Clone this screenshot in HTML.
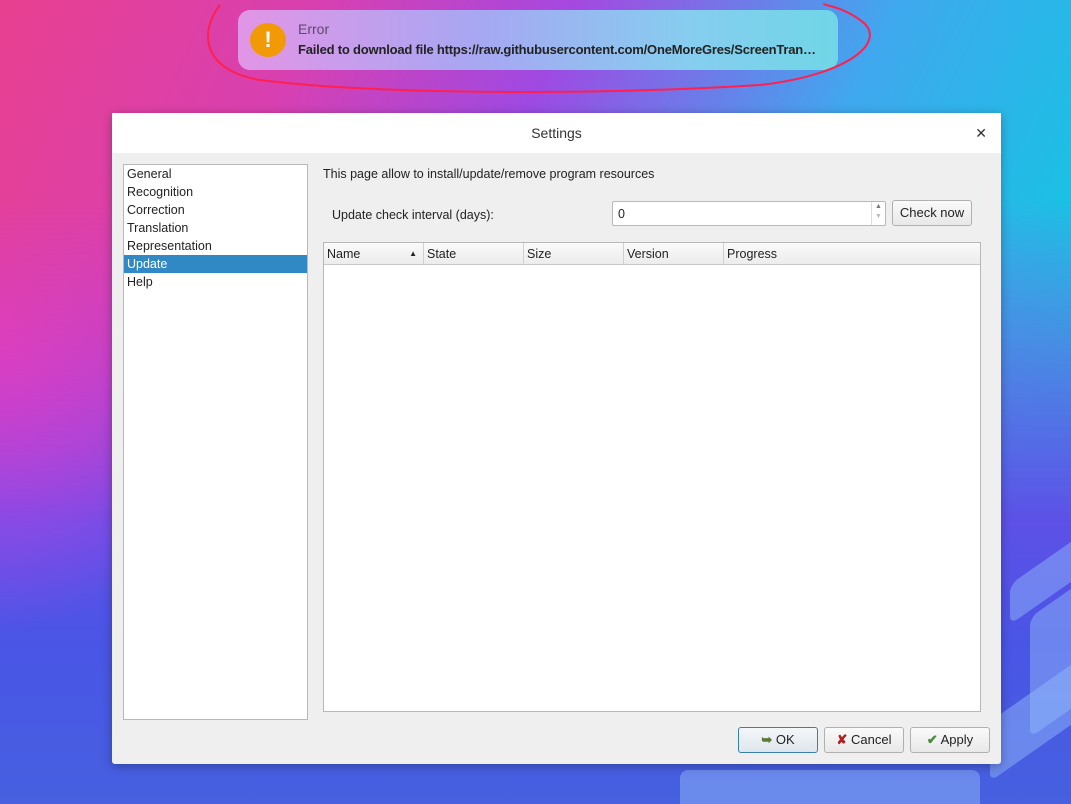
<!DOCTYPE html>
<html style="width:1071px;height:804px;overflow:hidden;background:#4a55e6"><head><meta charset="utf-8"><style>
*{box-sizing:border-box}
body{margin:0;width:1071px;height:804px;overflow:hidden;position:relative;font-family:"Liberation Sans",sans-serif;font-size:12.5px;color:#222;
background:linear-gradient(180deg,#c83fd8 0%,#a044e4 30%,#6a4ee8 55%,#4a55e6 80%,#4660e0 100%);}
.bg0{position:absolute;inset:0;background:radial-gradient(ellipse 260px 300px at 0px 330px,rgba(225,60,225,.9),rgba(225,60,225,0))}
.bg2{position:absolute;inset:0;background:linear-gradient(115deg,#e84090 0%,#d840b0 22%,rgba(140,80,230,.6) 40%,#40a8ee 62%,#12c6e2 85%,#10c8e0 100%);-webkit-mask-image:linear-gradient(180deg,#000 0%,#000 25%,transparent 65%);mask-image:linear-gradient(180deg,#000 0%,#000 25%,transparent 65%)}
.shape{position:absolute;background:rgba(150,190,250,.45);border-radius:8px}
.toast{position:absolute;left:238px;top:10px;width:600px;height:60px;border-radius:12px;background:linear-gradient(90deg,#e295e6,#a7a7f2 40%,#86cdef 75%,#70d6e6);}
.ico{position:absolute;left:12px;top:13px;width:36px;height:34px;border-radius:50%;background:#f29a06;color:#fff;font-weight:bold;font-size:22px;text-align:center;line-height:34px}
.dlg{position:absolute;left:112px;top:113px;width:889px;height:651px;background:#efefef;border-radius:3px;box-shadow:0 2px 10px rgba(0,0,0,.3)}
.title{height:40px;background:#fff;text-align:center;line-height:40px;font-size:14px;color:#333;position:relative}
.list{position:absolute;left:11px;top:51px;width:185px;height:556px;background:#fff;border:1px solid #b8b8b8}
.list div{height:18px;line-height:19px;padding-left:3px}
.sel{background:#3089c5;color:#fff}
.btn{position:absolute;height:26px;border:1px solid #b0b0b0;border-radius:3px;background:linear-gradient(#fafafa,#e8e8e8);text-align:center;line-height:24px;font-size:13px}
.table{position:absolute;left:211px;top:129px;width:658px;height:470px;background:#fff;border:1px solid #b8b8b8}
.th{height:22px;background:linear-gradient(#fafafa,#ececec);border-bottom:1px solid #c8c8c8;position:relative}
.th span{position:absolute;top:0;height:21px;line-height:22px;padding-left:3px;border-right:1px solid #d0d0d0}
</style></head><body><div class="bg0"></div><div class="bg2"></div>
<div class="shape" style="left:1010px;top:560px;width:70px;height:40px;transform:skewY(-35deg)"></div>
<div class="shape" style="left:1030px;top:600px;width:50px;height:120px;transform:skewY(-35deg)"></div>
<div class="shape" style="left:990px;top:690px;width:90px;height:60px;transform:skewY(-35deg)"></div>
<div class="shape" style="left:680px;top:770px;width:300px;height:34px;border-radius:8px 8px 0 0"></div>
<div class="toast"><div class="ico">!</div>
<div style="position:absolute;left:60px;top:11px;font-size:14px;color:#5a4a6a">Error</div>
<div style="position:absolute;left:60px;top:32px;font-size:13px;font-weight:bold;color:#222;letter-spacing:-0.2px;white-space:nowrap">Failed to download file https://raw.githubusercontent.com/OneMoreGres/ScreenTran…</div></div>
<svg style="position:absolute;left:0;top:0" width="1071" height="804"><path d="M220 5 C200 30,200 70,260 80 C380 95,600 95,760 85 C850 75,890 40,860 20 C840 5,820 5,825 4" fill="none" stroke="#ff2050" stroke-width="2"/>
<path d="M228 344 C215 320,205 300,197 285 C192 292,188 298,187 302 M197 285 C200 290,210 295,220 300 M202 288 L210 294" fill="none" stroke="#ff2050" stroke-width="2"/></svg>
<div class="dlg"><div class="title">Settings<span style="position:absolute;right:14px;top:0;font-size:14px">✕</span></div>
<div class="list"><div>General</div><div>Recognition</div><div>Correction</div><div>Translation</div><div>Representation</div><div class="sel">Update</div><div>Help</div></div>
<div style="position:absolute;left:211px;top:54px">This page allow to install/update/remove program resources</div>
<div style="position:absolute;left:220px;top:95px">Update check interval (days):</div>
<div style="position:absolute;left:500px;top:88px;width:274px;height:25px;background:#fff;border:1px solid #b8b8b8;border-radius:2px;line-height:24px;padding-left:5px">0<span style="position:absolute;right:0;top:0;width:14px;height:23px;border-left:1px solid #ddd;font-size:7px;line-height:10px;text-align:center;color:#777">▲<br><span style="color:#bbb">▼</span></span></div>
<div class="btn" style="left:780px;top:87px;width:80px">Check now</div>
<div class="table"><div class="th"><span style="left:0;width:100px">Name<i style="position:absolute;right:6px;font-style:normal;font-size:8px">▲</i></span><span style="left:100px;width:100px">State</span><span style="left:200px;width:100px">Size</span><span style="left:300px;width:100px">Version</span><span style="left:400px;width:257px;border:none">Progress</span></div></div>
<div class="btn" style="left:626px;top:614px;width:80px;border-color:#3a7fb0;background:linear-gradient(#f4f7fa,#dfe6ec)"><b style="color:#5a7a3a">➥</b> OK</div>
<div class="btn" style="left:712px;top:614px;width:80px"><b style="color:#b02020">✘</b> Cancel</div>
<div class="btn" style="left:798px;top:614px;width:80px"><b style="color:#4a8a3a">✔</b> Apply</div>
</div>
</body></html>
